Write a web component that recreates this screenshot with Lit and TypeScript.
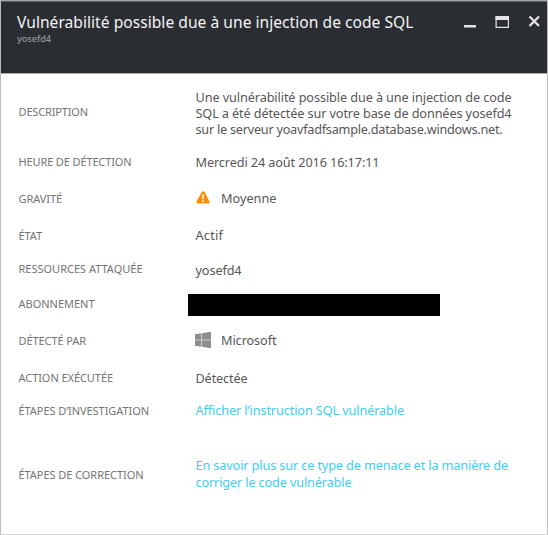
import { LitElement, html, css, svg, nothing } from "lit";
import { customElement, property } from "lit/decorators.js";

/** One line of text, tracked so that it takes up the given width. */
@customElement("fit-line")
class FitLine extends LitElement {
  @property() text = "";
  @property({ type: Number }) width = 0;

  static styles = css`
    :host { display: block; white-space: nowrap; }
    .line { display: inline-block; vertical-align: top; }
  `;

  updated() {
    const line = this.renderRoot.querySelector<HTMLElement>(".line");
    if (!line || !this.width) return;
    line.style.letterSpacing = "0px";
    const natural = line.getBoundingClientRect().width;
    line.style.letterSpacing = `${(this.width - natural) / this.text.length}px`;
  }

  render() {
    return html`<span class="line">${this.text}</span>`;
  }
}

type Line = [text: string, width: number];

interface Row {
  label: Line;
  lines: Line[];
  gap: number;
  /** Vertical nudge of the label against the value, in pixels. */
  shift?: number;
  drop?: number;
  kind?: "warning" | "windows" | "redacted" | "link";
}

const rows: Row[] = [
  {
    label: ["DESCRIPTION", 69.5],
    lines: [
      ["Une vulnérabilité possible due à une injection de code", 316],
      ["SQL a été détectée sur votre base de données yosefd4", 316],
      ["sur le serveur yoavfadfsample.database.windows.net.", 307],
    ],
    gap: 0,
    shift: -1,
  },
  { label: ["HEURE DE DÉTECTION", 113], lines: [["Mercredi 24 août 2016 16:17:11", 184]], gap: 17 },
  { label: ["GRAVITÉ", 43.5], lines: [["Moyenne", 55.5]], gap: 20, shift: 1, kind: "warning" },
  { label: ["ÉTAT", 23.5], lines: [["Actif", 27.5]], gap: 21, shift: 1 },
  { label: ["RESSOURCES ATTAQUÉE", 124], lines: [["yosefd4", 46]], gap: 17, drop: 2 },
  { label: ["ABONNEMENT", 76], lines: [], gap: 18, kind: "redacted" },
  { label: ["DÉTECTÉ PAR", 67.5], lines: [["Microsoft", 55.5]], gap: 20, shift: 1, kind: "windows" },
  { label: ["ACTION EXÉCUTÉE", 94.5], lines: [["Détectée", 52]], gap: 21, drop: 1 },
  {
    label: ["ÉTAPES D’INVESTIGATION", 130.5],
    lines: [["Afficher l’instruction SQL vulnérable", 208.5]],
    gap: 16,
    kind: "link",
  },
  {
    label: ["ÉTAPES DE CORRECTION", 125],
    lines: [
      ["En savoir plus sur ce type de menace et la manière de", 312.5],
      ["corriger le code vulnérable", 156],
    ],
    gap: 38,
    shift: 1,
    kind: "link",
  },
];

const warningIcon = html`<svg class="icon" width="16" height="16" viewBox="0 0 16 16">
  ${svg`<path d="M8.2 2.8 13.1 12.1H2.9Z" fill="#ff8c00" stroke="#ff8c00" stroke-width="3" stroke-linejoin="round"/>
  <path d="M7.2 4.4h1.8l-.2 4.8h-1.4zM7.2 10.2h1.8v1.8H7.2z" fill="#fff"/>`}
</svg>`;

const windowsIcon = html`<svg class="icon" width="16" height="16" viewBox="0 0 16 16">
  ${svg`<path d="M0 2.2 16 0v16L0 13.8Z" fill="#c9cbcc"/>
  <path d="M0 2.2 6 1.4V7.4H0zM7 1.25 16 0V7.4H7zM0 8.4H6v6.2L0 13.8zM7 8.4h9V16L7 14.8z" fill="#8b8d8f"/>`}
</svg>`;

@customElement("app-root")
class AppRoot extends LitElement {
  static styles = css`
    :host {
      display: block;
      box-sizing: border-box;
      width: 548px;
      height: 535px;
      overflow: hidden;
      background: #fff;
      border: 1px solid #b9bbbc;
      border-top-color: #a4a6a6;
      border-bottom-color: #d4d4d4;
      font-family: "Noto Sans", "Open Sans", sans-serif;
      font-size: 12.7px;
      line-height: 16px;
      color: #575757;
    }
    .header {
      box-sizing: border-box;
      display: flex;
      justify-content: space-between;
      height: 73px;
      padding: 9px 6px 0 16px;
      background: #2a2d32;
      border-top: 1px solid #5c5f62;
      border-bottom: 1px solid #a9abac;
    }
    .title { font-size: 15.6px; font-weight: 400; line-height: 22px; color: #f4f4f5; }
    .subtitle { font-size: 9.2px; font-weight: 500; line-height: 12px; color: #96999c; }
    .controls { display: block; margin-top: 3px; }
    .body { padding: 15px 0 0 17.5px; }
    .row { display: flex; align-items: center; }
    .label {
      width: 177px;
      flex: none;
      font-size: 11px;
      line-height: 16px;
      color: #747474;
    }
    .value { display: flex; align-items: center; }
    .icon { display: block; margin: 0 10px 0 -0.5px; flex: none; }
    .link { color: #3fcdf4; }
    .link .lines { line-height: 17px; }
    .redacted { margin: -3px 0 -4px -7.5px; width: 252px; height: 22px; background: #000; }
  `;

  renderRow(row: Row) {
    const shift = row.shift ?? 0;
    return html`<div class="row" style="margin-top:${row.gap}px">
      <fit-line
        class="label"
        style="margin-top:${shift}px;margin-bottom:${-shift}px"
        .text=${row.label[0]}
        .width=${row.label[1]}
      ></fit-line>
      ${row.kind === "redacted"
        ? html`<div class="redacted"></div>`
        : html`<div
            class="value ${row.kind === "link" ? "link" : ""}"
            style="margin-top:${row.drop ?? 0}px"
          >
            ${row.kind === "warning" ? warningIcon : row.kind === "windows" ? windowsIcon : nothing}
            <div class="lines">
              ${row.lines.map(([t, w]) => html`<fit-line .text=${t} .width=${w}></fit-line>`)}
            </div>
          </div>`}
    </div>`;
  }

  render() {
    return html`
      <div class="header">
        <div>
          <fit-line class="title" .text=${"Vulnérabilité possible due à une injection de code SQL"} .width=${396.5}></fit-line>
          <fit-line class="subtitle" .text=${"yosefd4"} .width=${34}></fit-line>
        </div>
        <svg class="controls" width="77" height="18" viewBox="0 0 77 18" fill="none">
          <path d="M0 11h12v2.5H0z" fill="#e4e5e6" />
          <path d="M32.1 3.1h12.3v10.2H32.1z" stroke="#e4e5e6" stroke-width="1.2" />
          <path d="M31.5 2h13.5v4H31.5z" fill="#e4e5e6" />
          <path d="M65.5 2.5l9.5 9.5M75 2.5 65.5 12" stroke="#e4e5e6" stroke-width="2.3" />
        </svg>
      </div>
      <div class="body">${rows.map((r) => this.renderRow(r))}</div>
    `;
  }
}
